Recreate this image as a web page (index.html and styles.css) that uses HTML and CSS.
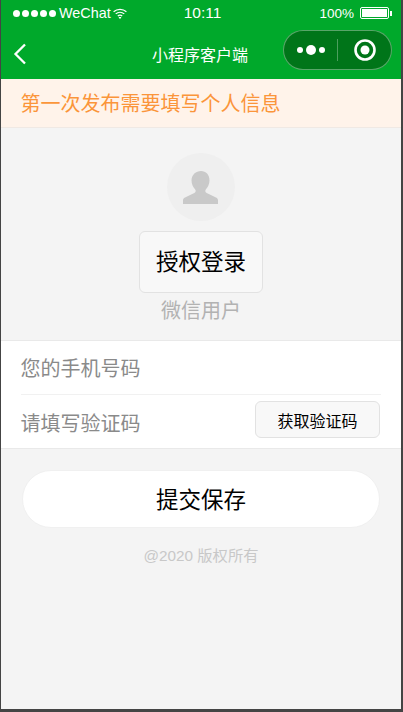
FILE: index.html
```html
<!DOCTYPE html>
<html lang="zh-CN">
<head>
<meta charset="utf-8">
<title>小程序客户端</title>
<link rel="stylesheet" href="styles.css">
</head>
<body>
<div class="frame">
  <header class="top">
    <div class="status">
      <div class="status-left">
        <span class="dots"><i></i><i></i><i></i><i></i><i></i></span>
        <span class="carrier">WeChat</span>
        <svg class="wifi" width="14" height="11" viewBox="0 0 14 11"><path d="M.6 3.700C4.200.500 9.800.500 13.400 3.700M2.700 5.900c2.500-2.200 6.100-2.200 8.600 0M4.800 8c1.300-1.100 3.100-1.100 4.400 0" fill="none" stroke="#fff" stroke-width="1.200"/><path d="M7 11 5.600 9.400c.8-.6 2-.6 2.800 0z" fill="#fff"/></svg>
      </div>
      <span class="time">10:11</span>
      <div class="status-right">
        <span class="pct">100%</span>
        <span class="battery"><span class="battery-fill"></span></span>
        <span class="battery-tip"></span>
      </div>
    </div>
    <div class="nav">
      <svg class="back" width="14" height="22" viewBox="0 0 14 22"><path d="M12 1.500 2.500 11 12 20.500" fill="none" stroke="#fff" stroke-width="2.300"/></svg>
      <h1 class="title">小程序客户端</h1>
      <div class="capsule">
        <span class="more"><i class="s"></i><i class="b"></i><i class="s"></i></span>
        <span class="sep"></span>
        <svg class="target" width="22" height="22" viewBox="0 0 22 22"><circle cx="11" cy="11" r="9.500" fill="none" stroke="#fff" stroke-width="2.600"/><circle cx="11" cy="11" r="4.500" fill="#fff"/></svg>
      </div>
    </div>
  </header>
  <div class="notice">第一次发布需要填写个人信息</div>
  <section class="profile">
    <div class="avatar">
      <svg width="36" height="36" viewBox="0 0 36 36"><path d="M18 1c5 0 8.500 3.800 8.500 9.300 0 3.900-1.700 7-3.500 9-1.100 1.300-.9 3 .7 3.800l9.300 4.400c1.300.6 2 1.700 2 3V34H0v-3.500c0-1.300.7-2.400 2-3l9.300-4.400c1.600-.8 1.800-2.500.7-3.800-1.800-2-3.500-5.100-3.500-9C8.500 4.800 13 1 18 1z" fill="#c9c9c9"/></svg>
    </div>
    <button class="auth">授权登录</button>
    <div class="nickname">微信用户</div>
  </section>
  <section class="form">
    <div class="row"><span class="label">您的手机号码</span></div>
    <div class="row last">
      <span class="label">请填写验证码</span>
      <button class="code">获取验证码</button>
    </div>
  </section>
  <button class="submit">提交保存</button>
  <p class="copy">@2020 版权所有</p>
</div>
</body>
</html>
```
FILE: styles.css
```css
* { box-sizing: border-box; }
html, body { margin: 0; height: 100%; }
body {
  background: #444;
  font-family: "Noto Sans CJK SC", "Liberation Sans", sans-serif;
  overflow: hidden;
}
.frame {
  width: 400px;
  height: 709px;
  margin-left: 1px;
  background: #f4f4f4;
  overflow: hidden;
}
.top { background: #00a92b; height: 79px; color: #fff; }
.status {
  height: 26px;
  padding: 0 9px 0 12px;
  display: grid;
  grid-template-columns: 1fr auto 1fr;
  align-items: center;
  font-family: "Liberation Sans", sans-serif;
}
.status-left { display: flex; align-items: center; }
.dots { display: flex; gap: 2px; margin-right: 3px; }
.dots i { width: 7px; height: 7px; border-radius: 50%; background: #fff; }
.carrier { font-size: 14.400px; margin-right: 2px; }
.time { font-size: 15.500px; }
.status-right { display: flex; align-items: center; justify-content: flex-end; }
.pct { font-size: 13.500px; margin-right: 6px; }
.battery { width: 29px; height: 12px; border: 1px solid #fff; border-radius: 2px; padding: 1px; display: block; }
.battery-fill { display: block; height: 100%; background: #fff; }
.battery-tip { width: 2px; height: 5px; background: #fff; margin-left: 1px; }
.nav {
  height: 53px;
  position: relative;
  display: flex;
  align-items: center;
  justify-content: space-between;
  padding: 0 9px 6px 12px;
}
.back { display: block; margin-top: 8px; }
.title {
  margin: 0;
  font-size: 16px;
  font-weight: 400;
  position: absolute;
  left: 151px;
  top: 16px;
  line-height: 24px;
}
.capsule {
  width: 109px;
  height: 40px;
  border: 1px solid rgba(255, 255, 255, .35);
  border-radius: 20px;
  background: #007519;
  display: flex;
  align-items: center;
  padding-left: 13px;
}
.more { display: flex; align-items: center; gap: 3px; }
.more i { display: block; border-radius: 50%; background: #fff; }
.more .s { width: 6px; height: 6px; }
.more .b { width: 10px; height: 10px; }
.sep { width: 1px; height: 22px; background: rgba(255, 255, 255, .3); margin-left: 12px; margin-right: 16px; }
.target { display: block; }
.notice {
  height: 49px;
  background: #fff3ea;
  border-bottom: 1px solid #f0e9e4;
  color: #fb953a;
  font-size: 20px;
  line-height: 48px;
  padding-left: 19.500px;
}
.profile { height: 212px; display: flex; flex-direction: column; align-items: center; padding-top: 25px; }
.avatar {
  width: 68px;
  height: 68px;
  border-radius: 50%;
  background: #efefef;
  display: flex;
  align-items: center;
  justify-content: center;
}
.avatar svg { display: block; margin-top: 2px; }
.auth {
  margin-top: 10px;
  width: 124px;
  height: 62px;
  border: 1px solid #e2e2e2;
  border-radius: 6px;
  background: #f8f8f8;
  color: #000;
  font: inherit;
  font-size: 22.500px;
  padding: 0 0 5px;
}
.nickname { color: #b2b2b2; font-size: 20px; line-height: 30px; margin-top: 2px; }
.form {
  background: #fff;
  border-top: 1px solid #e9e9e9;
  border-bottom: 1px solid #e9e9e9;
  padding-left: 20px;
  height: 109px;
}
.row {
  height: 54px;
  margin-right: 20px;
  border-bottom: 1px solid #f1f1f1;
  display: flex;
  align-items: center;
  justify-content: space-between;
}
.row.last { border-bottom: 0; height: 53px; }
.label { color: #8a8a8a; font-size: 20px; line-height: 30px; margin-left: -.5px; }
.row.last .label { margin-top: 3px; }
.code {
  width: 125px;
  height: 37px;
  border: 1px solid #e2e2e2;
  border-radius: 6px;
  background: #f8f8f8;
  color: #000;
  font: inherit;
  font-size: 16px;
  padding: 0;
  margin-top: -4px;
  margin-right: 1px;
}
.submit {
  display: block;
  margin: 21px 0 0 21px;
  width: 358px;
  height: 58px;
  border: 1px solid #f0f0f0;
  border-radius: 29px;
  background: #fff;
  color: #000;
  font: inherit;
  font-size: 22.500px;
  padding: 0 0 2px;
}
.copy {
  margin: 17px 0 0;
  text-align: center;
  color: #c8c8c8;
  font-family: "Liberation Sans", "Noto Sans CJK SC", sans-serif;
  font-size: 15.300px;
  line-height: 22px;
}
```
